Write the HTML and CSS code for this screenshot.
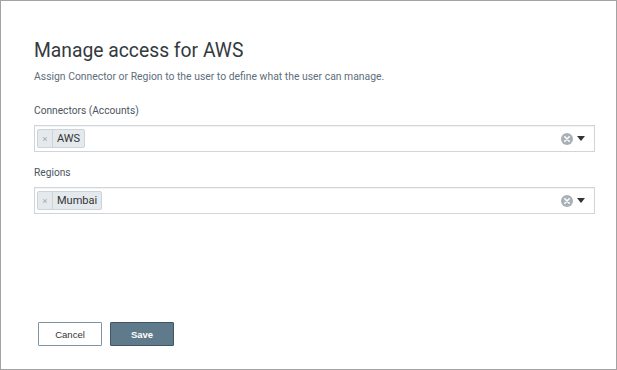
FILE: index.html
```html
<!DOCTYPE html>
<html>
<head>
<meta charset="utf-8">
<link rel="stylesheet" href="styles.css">
</head>
<body>
<div class="frame">
  <div class="dialog">
    <h1 class="title">Manage access for AWS</h1>
    <p class="subtitle">Assign Connector or Region to the user to define what the user can manage.</p>

    <div class="field">
      <label class="label">Connectors (Accounts)</label>
      <div class="select">
        <div class="tags">
          <span class="tag"><span class="tag-x">×</span><span class="tag-text">AWS</span></span>
        </div>
        <div class="controls">
          <svg class="clear" width="12" height="12" viewBox="0 0 12 12"><circle cx="6" cy="6" r="6" fill="#a9b1b8"/><path d="M3.8 3.8 L8.2 8.2 M8.2 3.8 L3.8 8.2" stroke="#fff" stroke-width="1.6" stroke-linecap="round"/></svg>
          <svg class="arrow" width="8" height="5" viewBox="0 0 8 5"><path d="M0 0 H8 L4 5 Z" fill="#333"/></svg>
        </div>
      </div>
    </div>

    <div class="field">
      <label class="label">Regions</label>
      <div class="select">
        <div class="tags">
          <span class="tag"><span class="tag-x">×</span><span class="tag-text">Mumbai</span></span>
        </div>
        <div class="controls">
          <svg class="clear" width="12" height="12" viewBox="0 0 12 12"><circle cx="6" cy="6" r="6" fill="#a9b1b8"/><path d="M3.8 3.8 L8.2 8.2 M8.2 3.8 L3.8 8.2" stroke="#fff" stroke-width="1.6" stroke-linecap="round"/></svg>
          <svg class="arrow" width="8" height="5" viewBox="0 0 8 5"><path d="M0 0 H8 L4 5 Z" fill="#333"/></svg>
        </div>
      </div>
    </div>

    <div class="actions">
      <button class="btn btn-cancel">Cancel</button>
      <button class="btn btn-save">Save</button>
    </div>
  </div>
</div>
</body>
</html>
```

FILE: styles.css
```css
html, body {
  margin: 0;
  padding: 0;
  background: #ffffff;
}

.frame {
  width: 617px;
  height: 370px;
  box-sizing: border-box;
  border: 1px solid #a3a3a3;
  background: #ffffff;
  font-family: Roboto, "Liberation Sans", sans-serif;
}

.dialog {
  padding: 36px 21px 0 33px;
  display: flex;
  flex-direction: column;
}

.title {
  margin: 0;
  font-size: 19.3px;
  font-weight: 400;
  line-height: 28px;
  color: #333a40;
}

.subtitle {
  margin: 5px 0 0 0;
  font-size: 10.4px;
  line-height: 14px;
  color: #5e6e7c;
}

.field {
  margin-top: 20px;
  display: flex;
  flex-direction: column;
}

.field + .field {
  margin-top: 14px;
}

.label {
  font-size: 10.2px;
  line-height: 14px;
  color: #4b5560;
  margin-bottom: 7px;
}

.select {
  height: 27px;
  box-sizing: border-box;
  border: 1px solid #cfd5da;
  box-shadow: inset 0 1px 1px rgba(0,0,0,0.05);
  display: flex;
  align-items: center;
  justify-content: space-between;
  padding: 0 9px 0 2px;
  background: #fff;
}

.tags {
  display: flex;
  align-items: center;
}

.tag {
  display: inline-flex;
  align-items: stretch;
  height: 19px;
  box-sizing: border-box;
  background: #e4e9ed;
  border: 1px solid #ccd4da;
  border-radius: 2px;
}

.tag-x {
  width: 14px;
  display: flex;
  align-items: center;
  justify-content: center;
  font-size: 9px;
  color: #a0a8b0;
  border-right: 1px solid #ccd4da;
}

.tag-text {
  display: flex;
  align-items: center;
  padding: 0 4px 0 4px;
  font-size: 11px;
  color: #333;
}

.controls {
  display: flex;
  align-items: center;
  gap: 4px;
}

.clear {
  display: block;
}

.arrow {
  display: block;
}

.actions {
  margin-top: 108px;
  margin-left: 4px;
  display: flex;
  gap: 8px;
}

.btn {
  width: 64px;
  height: 24px;
  box-sizing: border-box;
  font-family: "Liberation Sans", Arial, sans-serif;
  font-size: 9.5px;
  border-radius: 1px;
  padding: 0;
  cursor: pointer;
}

.btn-cancel {
  background: #fff;
  border: 1px solid #7e94a3;
  color: #333;
}

.btn-save {
  background: #5f7a8a;
  border: 1px solid #3f5666;
  color: #fff;
  font-weight: bold;
}
```
